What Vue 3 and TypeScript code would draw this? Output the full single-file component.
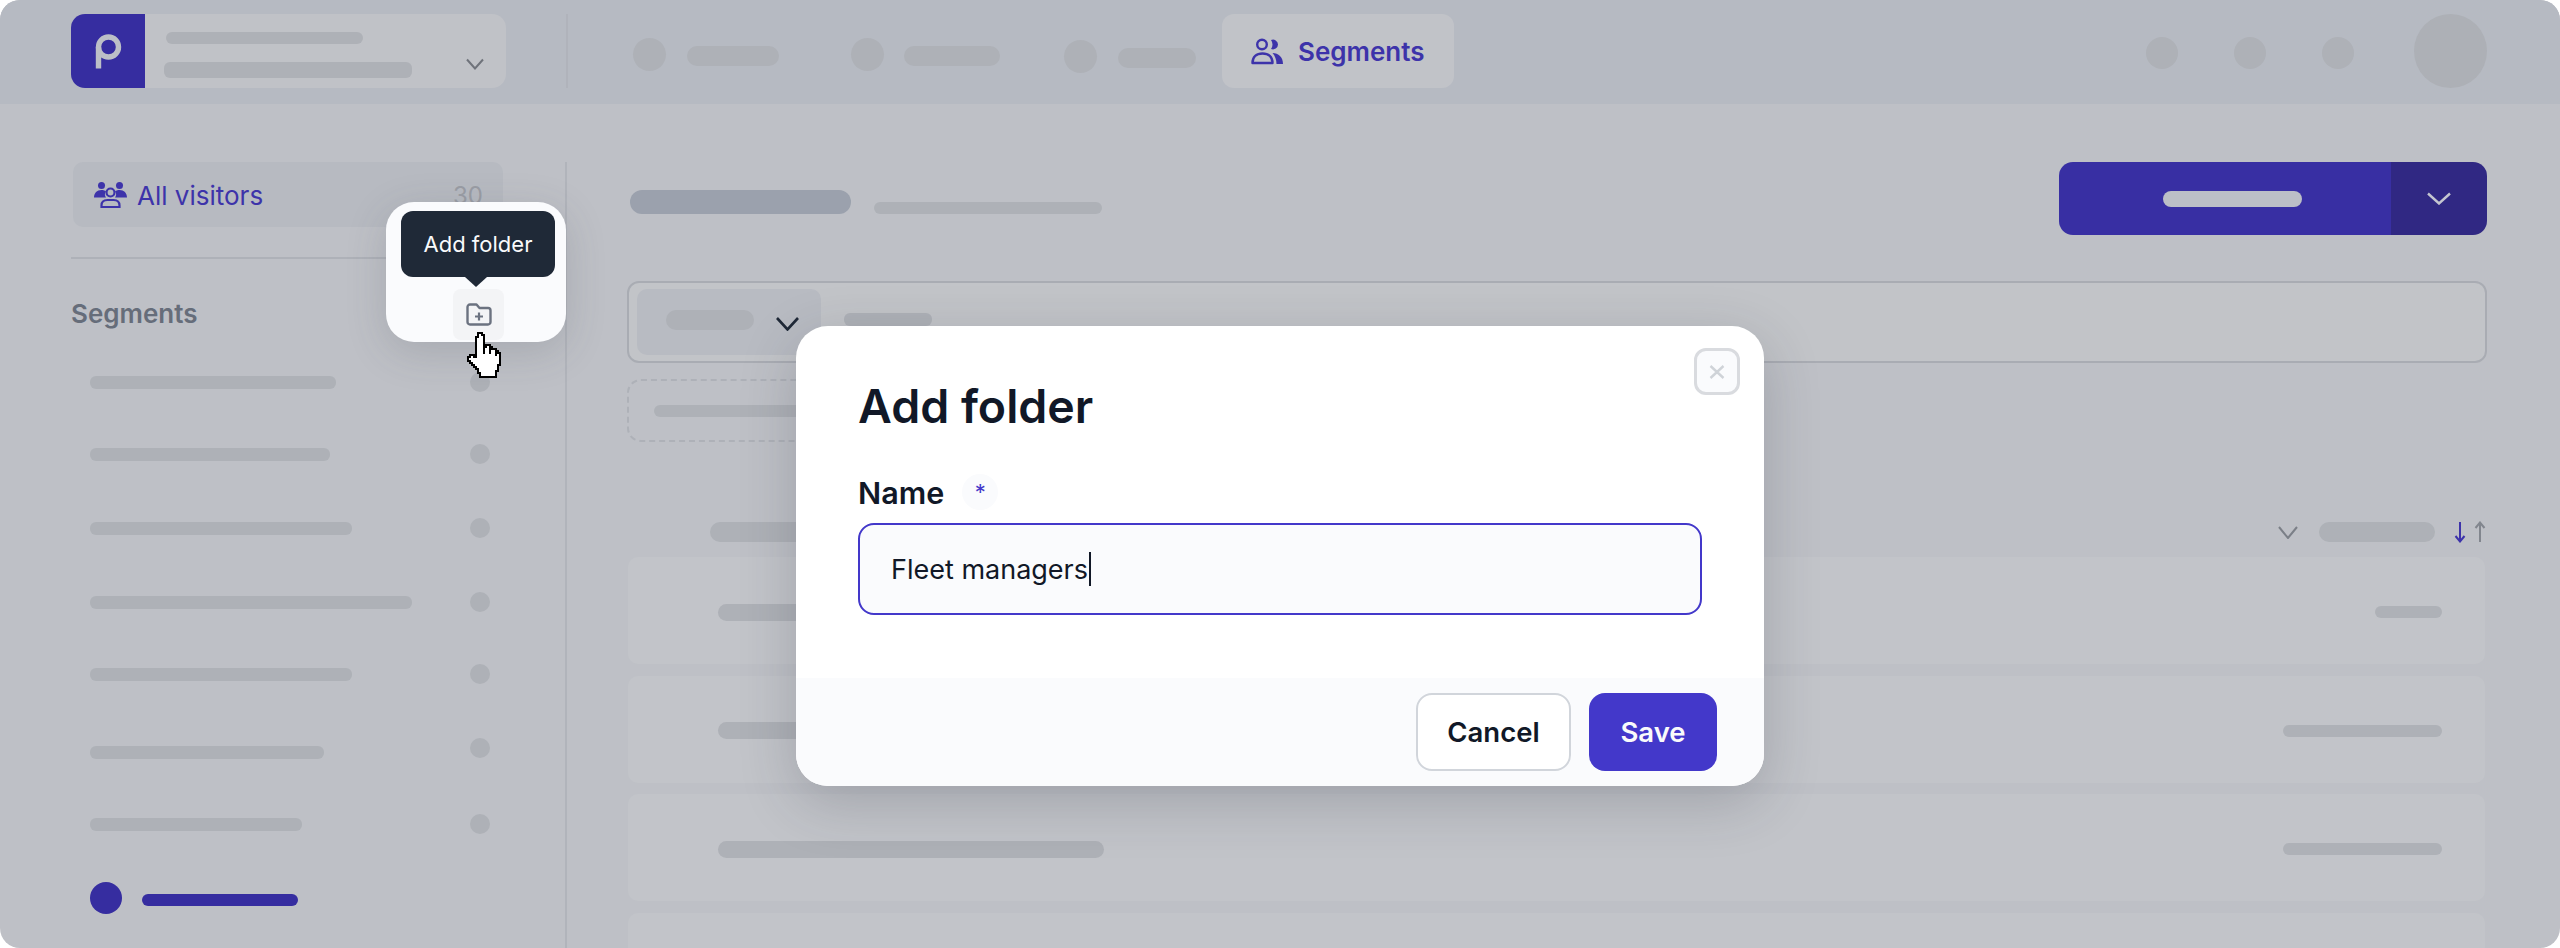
<script setup lang="ts">
const navItems = [
  { label: 92, key: 'a' },
  { label: 96, key: 'b' },
  { label: 78, key: 'c' },
]
const segments = [
  { w: 246, top: 0, dot: 0 },
  { w: 240, top: 72, dot: 0 },
  { w: 262, top: 74, dot: 0 },
  { w: 322, top: 74, dot: 0 },
  { w: 262, top: 72, dot: 0 },
  { w: 234, top: 78, dot: -4 },
  { w: 212, top: 72, dot: 0 },
]
const rows = [
  { left: 386, right: 67 },
  { left: 386, right: 159 },
  { left: 386, right: 159 },
  { left: 386, right: 159 },
]
</script>

<template>
  <div class="shell">
    <header class="topbar">
      <div class="org">
        <div class="logo">
          <svg width="74" height="74" viewBox="0 0 74 74" fill="none">
            <circle cx="37.5" cy="33" r="10" stroke="#bcbfc7" stroke-width="5.4" />
            <path d="M27.500 33v21.500" stroke="#bcbfc7" stroke-width="5.4" />
          </svg>
        </div>
        <div class="org-lines">
          <span class="bar org-a"></span>
          <span class="bar org-b"></span>
        </div>
        <svg class="org-chev" width="18" height="12" viewBox="0 0 18 12" fill="none">
          <path d="M1 1.500 9 10.500 17 1.500" stroke="#6f737b" stroke-width="2" />
        </svg>
      </div>
      <div class="top-rule"></div>
      <nav class="nav">
        <div v-for="n in navItems" :key="n.key" class="nav-item" :class="'nav-' + n.key">
          <span class="dot nav-dot"></span>
          <span class="bar nav-bar" :style="{ width: n.label + 'px' }"></span>
        </div>
        <div class="tab">
          <svg width="32" height="27" viewBox="0 0 32 27" fill="none">
            <circle cx="11" cy="6.500" r="4.800" stroke="#3d33aa" stroke-width="2.400" />
            <path d="M20 2a5 5 0 0 1 7 4.500A5 5 0 0 1 20 11a8 8 0 0 0 0-9z" fill="#3d33aa" />
            <path d="M1.500 25c0-6 4-9.500 10-9.500S21.500 19 21.500 25z" stroke="#3d33aa" stroke-width="2.400" stroke-linejoin="round" />
            <path d="M21.500 15c6 0 10.500 4 10.500 11h-6.500c0-4.500-1.500-8-4-11z" fill="#3d33aa" />
          </svg>
          <span>Segments</span>
        </div>
      </nav>
      <div class="top-right">
        <span class="dot round"></span>
        <span class="dot round"></span>
        <span class="dot round"></span>
        <span class="avatar"></span>
      </div>
    </header>

    <div class="body">
      <aside class="side">
        <div class="all">
          <svg width="33" height="26" viewBox="0 0 33 26" fill="#3d33aa">
            <circle cx="7.500" cy="3.500" r="3.500" />
            <circle cx="25.500" cy="3.500" r="3.500" />
            <path d="M0 15.500c0-4.500 3-7.500 7.500-7.500 2 0 3.500.5 4.500 1.500-1.500 1.500-1.500 4 0 6z" />
            <path d="M33 15.500c0-4.500-3-7.500-7.500-7.500-2 0-3.500.5-4.500 1.500 1.500 1.500 1.500 4 0 6z" />
            <circle cx="16.500" cy="10.500" r="4" fill="none" stroke="#3d33aa" stroke-width="2.200" />
            <path d="M7.500 25v-1.500c0-3.500 2.500-5.500 6-5.500h6c3.500 0 6 2 6 5.500V25z" fill="none" stroke="#3d33aa" stroke-width="2.200" />
          </svg>
          <span class="all-label">All visitors</span>
          <span class="all-count">30</span>
        </div>
        <div class="side-rule"></div>
        <h3 class="side-title">Segments</h3>
        <ul class="seg-list">
          <li v-for="(s, i) in segments" :key="i" class="seg" :style="{ marginTop: s.top - 20 + 'px' }">
            <span class="bar seg-bar" :style="{ width: s.w + 'px' }"></span>
            <span class="dot seg-dot" :style="{ transform: 'translateY(' + s.dot + 'px)' }"></span>
          </li>
        </ul>
        <div class="side-foot">
          <span class="foot-dot"></span>
          <span class="foot-bar"></span>
        </div>
      </aside>

      <main class="main">
        <div class="main-head">
          <div class="titles">
            <span class="title-bar"></span>
            <span class="bar sub-bar"></span>
          </div>
          <div class="cta">
            <div class="cta-main"><span class="cta-pill"></span></div>
            <div class="cta-side">
              <svg width="24" height="13" viewBox="0 0 24 13" fill="none">
                <path d="M1 1.500 12 11.500 23 1.500" stroke="#c4c6d0" stroke-width="2.400" />
              </svg>
            </div>
          </div>
        </div>

        <div class="filter">
          <div class="filter-drop">
            <span class="bar fd-bar"></span>
            <svg width="23" height="14" viewBox="0 0 23 14" fill="none">
              <path d="M1 1 11.500 12.500 22 1" stroke="#1f2937" stroke-width="2.600" />
            </svg>
          </div>
          <span class="bar fb-bar"></span>
        </div>

        <div class="dashed"><span class="bar dash-bar"></span></div>

        <div class="table-head">
          <span class="bar th-left"></span>
          <div class="th-right">
            <svg width="20" height="13" viewBox="0 0 20 13" fill="none">
              <path d="M1 1 10 12 19 1" stroke="#7b7f87" stroke-width="2" />
            </svg>
            <span class="bar th-bar"></span>
            <svg class="arrows" width="34" height="22" viewBox="0 0 34 22" fill="none">
              <path d="M6 1v19M1.500 15 6 20.500 10.500 15" stroke="#3d33aa" stroke-width="2" />
              <path d="M26 21V2M21.500 7 26 1.500 30.500 7" stroke="#82868e" stroke-width="2" />
            </svg>
          </div>
        </div>

        <div class="rows">
          <div v-for="(r, i) in rows" :key="i" class="row">
            <span class="bar row-left" :style="{ width: r.left + 'px' }"></span>
            <span class="bar row-right" :style="{ width: r.right + 'px' }"></span>
          </div>
        </div>
      </main>
    </div>

    <div class="spot">
      <div class="tip">Add folder</div>
      <div class="tip-arrow"></div>
      <div class="spot-icon">
        <svg width="26" height="23" viewBox="0 0 26 23" fill="none">
          <path d="M1.500 4a2.500 2.500 0 0 1 2.500-2.500h6.500l3 3.500H22a2.500 2.500 0 0 1 2.500 2.500V19a2.500 2.500 0 0 1-2.500 2.500H4A2.500 2.500 0 0 1 1.500 19z" stroke="#6b7280" stroke-width="2.400" stroke-linejoin="round" />
          <path d="M13 9.500v8M9 13.500h8" stroke="#6b7280" stroke-width="2.200" />
        </svg>
      </div>
    </div>

    <svg class="hand" width="36" height="46" viewBox="0 0 18 23" shape-rendering="crispEdges">
      <path d="M5.500 .5h2v1h1v6h1v-1h2v1h1v1h2v1h1v1h1v6h-1v3h-1v3h-8v-2h-1v-2h-1v-1h-1v-1h-1v-1h-1v-1h-1v-2h1v-1h2v1h1v-10h1z" fill="#fff" stroke="#000" stroke-width="1" />
      <path d="M8.500 8v3M11.500 8v3M14.500 10v2" stroke="#000" stroke-width=".7" />
    </svg>

    <div class="modal">
      <div class="modal-body">
        <button class="close" type="button" aria-label="Close">
          <svg width="16" height="14" viewBox="0 0 16 14" fill="none">
            <path d="M1.500 1 14.500 13M14.500 1 1.500 13" stroke="#cfd3d8" stroke-width="2.400" />
          </svg>
        </button>
        <h2 class="modal-title">Add folder</h2>
        <div class="label-row">
          <span class="label">Name</span>
          <span class="req">*</span>
        </div>
        <div class="input"><span>Fleet managers</span><i class="caret"></i></div>
      </div>
      <div class="modal-foot">
        <button class="btn cancel" type="button">Cancel</button>
        <button class="btn save" type="button">Save</button>
      </div>
    </div>
  </div>
</template>

<style>
html, body { margin: 0; background: #fff; }
</style>

<style scoped>
.shell {
  position: relative;
  width: 2560px;
  height: 948px;
  overflow: hidden;
  border-radius: 20px;
  background: #bec0c6;
  font-family: Inter, "Liberation Sans", sans-serif;
  display: flex;
  flex-direction: column;
  color: #111827;
}
.bar { display: block; flex: none; background: #aeb1b7; border-radius: 6px; }
.dot { display: block; flex: none; border-radius: 50%; background: #aeb1b7; }

.topbar {
  height: 104px;
  flex: none;
  background: #b6bac2;
  box-sizing: border-box;
  padding: 14px 73px 16px 71px;
  display: flex;
  align-items: stretch;
}
.org {
  width: 435px;
  display: flex;
  background: #c0c2c7;
  border-radius: 14px;
  overflow: hidden;
  position: relative;
  flex: none;
}
.logo { width: 74px; flex: none; background: #362da0; }
.logo svg { display: block; }
.org-lines { display: flex; flex-direction: column; padding: 18px 0 0 19px; gap: 18px; }
.org-a { width: 197px; height: 12px; margin-left: 2px; }
.org-b { width: 248px; height: 16px; }
.org-chev { position: absolute; right: 22px; top: 44px; }
.top-rule { width: 2px; background: #b0b3bb; margin-left: 60px; flex: none; }

.nav { display: flex; align-items: stretch; margin-left: 65px; }
.nav-item { display: flex; align-items: center; padding-top: 6px; }
.nav-a { width: 218px; gap: 21px; }
.nav-b { width: 213px; gap: 20px; }
.nav-c { width: 158px; gap: 21px; padding-top: 10px; }
.nav-dot { width: 33px; height: 33px; }
.nav-bar { height: 20px; border-radius: 10px; margin-top: 4px; }
.tab {
  width: 232px;
  display: flex;
  align-items: center;
  gap: 15px;
  box-sizing: border-box;
  padding-left: 29px;
  background: #c1c3c8;
  border-radius: 12px;
  color: #3d33aa;
  font-size: 26px;
  font-weight: 600;
}
.top-right { margin-left: auto; display: flex; align-items: center; }
.round { width: 32px; height: 32px; margin-right: 56px; margin-top: 4px; }
.round:nth-child(3) { margin-right: 60px; }
.avatar { width: 73px; height: 74px; border-radius: 50%; background: #adb0b6; }

.body { flex: 1; display: flex; min-height: 0; padding-top: 58px; }
.side {
  width: 496px;
  margin-left: 71px;
  flex: none;
  box-sizing: border-box;
  padding-right: 62px;
  border-right: 2px solid #b1b4bb;
  display: flex;
  flex-direction: column;
}
.all {
  height: 65px;
  flex: none;
  display: flex;
  align-items: center;
  box-sizing: border-box;
  padding: 1px 20px 0 21px;
  background: #b7bac1;
  border-radius: 10px;
  margin-left: 2px;
  gap: 10px;
  font-size: 26px;
}
.all-label { color: #3d33aa; }
.all-count { margin-left: auto; color: #9a9da5; font-size: 24px; }
.side-rule { height: 2px; flex: none; background: #aeb1b8; margin-top: 30px; }
.side-title { flex: none; margin: 40px 0 0; font-size: 26px; line-height: 30px; font-weight: 600; color: #666d7a; }
.seg-list { list-style: none; flex: none; margin: 43px 0 0; padding: 0 0 0 19px; display: flex; flex-direction: column; }
.seg { height: 20px; flex: none; display: flex; align-items: center; justify-content: space-between; padding-right: 13px; }
.seg:first-child { margin-top: 0 !important; }
.seg-bar { height: 13px; }
.seg-dot { width: 20px; height: 20px; }
.side-foot { display: flex; flex: none; align-items: center; gap: 20px; margin: 48px 0 0 19px; }
.foot-dot { width: 32px; height: 32px; border-radius: 50%; background: #362da0; }
.foot-bar { width: 156px; height: 12px; margin-top: 4px; border-radius: 6px; background: #362da0; }

.main { flex: 1; min-width: 0; box-sizing: border-box; padding: 0 73px 0 60px; display: flex; flex-direction: column; }
.main-head { height: 73px; flex: none; display: flex; justify-content: space-between; }
.titles { display: flex; align-items: flex-end; gap: 23px; padding: 28px 0 21px 3px; box-sizing: border-box; }
.title-bar { width: 221px; height: 24px; border-radius: 12px; background: #9ba1ad; }
.sub-bar { width: 228px; height: 12px; }
.cta { width: 428px; display: flex; border-radius: 14px; overflow: hidden; }
.cta-main { flex: 1; background: #382fa3; display: flex; align-items: center; justify-content: center; padding-left: 14px; }
.cta-pill { width: 139px; height: 16px; border-radius: 8px; background: #bcbfc7; }
.cta-side { width: 96px; background: #302883; display: flex; align-items: center; justify-content: center; }

.filter {
  height: 82px;
  flex: none;
  margin-top: 46px;
  box-sizing: border-box;
  border: 2px solid #a9acb3;
  border-radius: 12px;
  background: #c2c4c8;
  display: flex;
  padding: 6px 8px;
}
.filter-drop {
  width: 184px;
  height: 66px;
  flex: none;
  background: #b8bbc2;
  border-radius: 10px;
  display: flex;
  padding: 21px 0 0 29px;
  box-sizing: border-box;
  gap: 22px;
  align-items: flex-start;
}
.filter-drop svg { margin-top: 7px; }
.fd-bar { width: 88px; height: 20px; border-radius: 10px; }
.fb-bar { width: 88px; height: 13px; margin: 24px 0 0 23px; }

.dashed {
  width: 520px;
  height: 63px;
  flex: none;
  margin-top: 16px;
  box-sizing: border-box;
  border: 2px dashed #aeb1b8;
  border-radius: 14px;
  display: flex;
  align-items: center;
  padding-left: 25px;
}
.dash-bar { width: 300px; height: 12px; }

.table-head { display: flex; flex: none; justify-content: space-between; align-items: center; height: 20px; margin-top: 80px; }
.th-left { width: 400px; height: 20px; margin-left: 83px; border-radius: 10px; }
.th-right { display: flex; align-items: center; gap: 21px; }
.th-bar { width: 116px; height: 20px; border-radius: 10px; }
.arrows { margin-left: -2px; margin-right: -1px; }

.rows { display: flex; flex: none; flex-direction: column; gap: 11.500px; margin-top: 15px; }
.row {
  height: 107px;
  flex: none;
  background: #c2c4c9;
  border-radius: 10px;
  display: flex;
  align-items: center;
  justify-content: space-between;
  box-sizing: border-box;
  margin: 0 2px 0 1px;
  padding: 3px 43px 0 90px;
}
.row-left { height: 17px; border-radius: 9px; }
.row-right { height: 12px; }

/* Highlighted control with its tooltip, above the dimmed page */
.spot {
  position: absolute;
  left: 386px;
  top: 202px;
  width: 180px;
  height: 140px;
  background: #fafbfd;
  border-radius: 28px;
  box-shadow: 0 10px 40px rgba(60, 64, 80, .18);
}
.tip {
  position: absolute;
  left: 15px;
  top: 9px;
  width: 154px;
  height: 66px;
  background: #1f2937;
  border-radius: 12px;
  color: #f9fafb;
  font-size: 22px;
  display: flex;
  align-items: center;
  justify-content: center;
}
.tip-arrow {
  position: absolute;
  left: 79px;
  top: 75px;
  width: 0;
  height: 0;
  border-left: 11px solid transparent;
  border-right: 11px solid transparent;
  border-top: 10px solid #1f2937;
}
.spot-icon {
  position: absolute;
  left: 67px;
  top: 87px;
  width: 51px;
  height: 51px;
  background: #f3f4f6;
  border-radius: 8px;
  display: flex;
  align-items: center;
  justify-content: center;
}
.hand { position: absolute; left: 467px; top: 332px; }

.modal {
  position: absolute;
  left: 796px;
  top: 326px;
  width: 968px;
  height: 460px;
  background: #fff;
  border-radius: 32px;
  overflow: hidden;
  display: flex;
  flex-direction: column;
  box-shadow: 0 16px 56px rgba(40, 44, 60, .22);
}
.modal-body { flex: 1; position: relative; box-sizing: border-box; padding: 52px 62px 0; }
.close {
  position: absolute;
  right: 24px;
  top: 22px;
  width: 46px;
  height: 47px;
  box-sizing: border-box;
  padding: 0;
  border: 3px solid #d9dbdf;
  border-radius: 12px;
  background: #fafbfd;
  display: flex;
  align-items: center;
  justify-content: center;
}
.modal-title { margin: 0; font-size: 46.500px; line-height: 56px; font-weight: 600; color: #111827; }
.label-row { display: flex; align-items: center; margin-top: 39px; height: 38px; }
.label { font-size: 30.500px; font-weight: 600; color: #111827; }
.req {
  width: 36px;
  height: 36px;
  border-radius: 50%;
  background: #fafbfd;
  margin-left: 18px;
  color: #4338ca;
  font-size: 22px;
  display: flex;
  align-items: center;
  justify-content: center;
}
.input {
  height: 92px;
  margin-top: 12px;
  box-sizing: border-box;
  border: 2px solid #4338ca;
  border-radius: 16px;
  background: #fafbfd;
  padding-left: 31px;
  display: flex;
  align-items: center;
  font-size: 27px;
  color: #111827;
}
.caret { width: 2px; height: 34px; background: #111827; margin-left: 1px; }
.modal-foot {
  height: 108px;
  flex: none;
  background: #fafbfd;
  display: flex;
  justify-content: flex-end;
  gap: 18px;
  box-sizing: border-box;
  padding: 15px 47px 15px 0;
}
.btn { font-family: inherit; font-size: 27.500px; font-weight: 600; border-radius: 16px; padding: 0; height: 78px; }
.cancel { width: 155px; background: #fff; border: 2px solid #d1d5db; color: #111827; }
.save { width: 128px; background: #4338ca; border: none; color: #f9fafb; }
</style>
